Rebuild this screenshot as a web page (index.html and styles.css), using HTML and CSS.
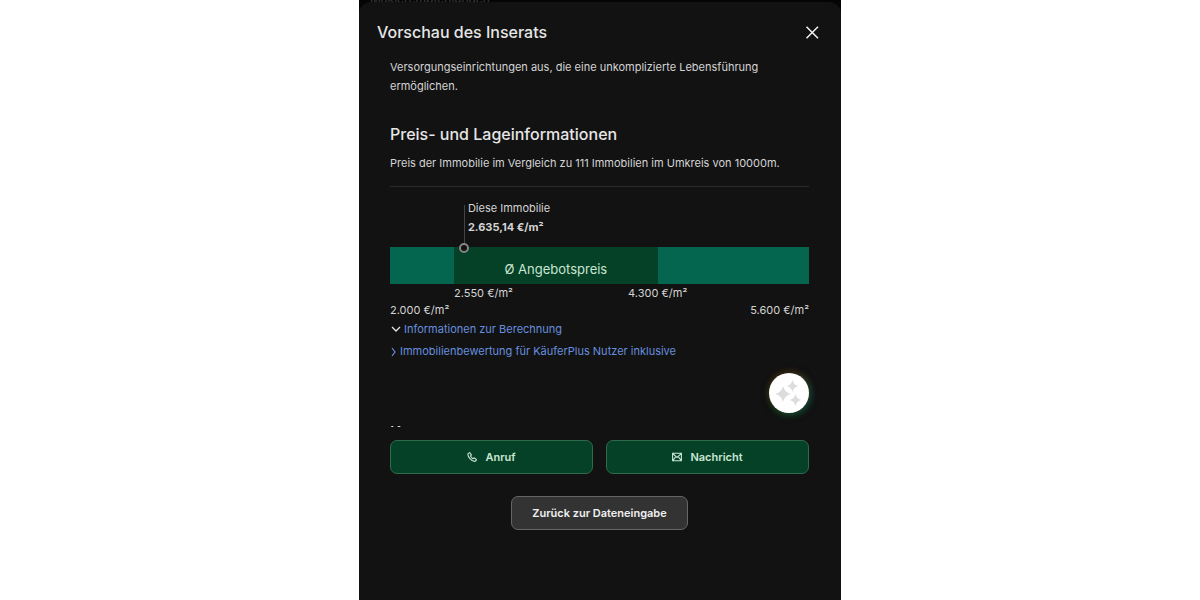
FILE: index.html
```html
<!DOCTYPE html>
<html lang="de">
<head>
<meta charset="utf-8">
<meta name="viewport" content="width=device-width, initial-scale=1">
<title>Vorschau des Inserats</title>
<link rel="stylesheet" href="styles.css">
</head>
<body>
<div class="screen">
  <div class="backdrop" aria-hidden="true">Maklerempfehlungen</div>
  <section class="sheet">
    <header class="sheet-header">
      <h1 class="sheet-title">Vorschau des Inserats</h1>
      <button class="close" type="button" aria-label="Schließen">
        <svg width="14" height="14" viewBox="0 0 14 14"><path d="M1.500 1.800l11.500 11.500M13 1.800L1.500 13.300" fill="none" stroke="currentColor" stroke-width="1.5"/></svg>
      </button>
    </header>

    <main class="content">
      <p class="text">Versorgungseinrichtungen aus, die eine unkomplizierte Lebensführung ermöglichen.</p>
      <h2 class="section-title">Preis- und Lageinformationen</h2>
      <p class="text">Preis der Immobilie im Vergleich zu 111 Immobilien im Umkreis von 10000m.</p>

      <div class="price-range">
        <div class="marker" style="left: 17.64%">
          <span>Diese Immobilie</span>
          <strong>2.635,14 €/m²</strong>
        </div>
        <div class="bar">
          <div class="average" style="left: 15.28%; width: 48.61%">Ø Angebotspreis</div>
        </div>
        <div class="bounds">
          <span class="bound-low" style="left: 15.28%">2.550 €/m²</span>
          <span class="bound-high" style="left: 63.89%">4.300 €/m²</span>
        </div>
        <div class="extremes"><span>2.000 €/m²</span><span>5.600 €/m²</span></div>
      </div>

      <div class="links">
        <a class="link" href="#berechnung">
          <svg class="chevron-down" width="12" height="12" viewBox="0 0 12 12"><path d="M2 3l4 4 4-4" fill="none" stroke="currentColor" stroke-width="1.3"/></svg>
          Informationen zur Berechnung
        </a>
        <a class="link" href="#bewertung">
          <svg width="8" height="10" viewBox="0 0 8 10"><path d="M2 1l3 4-3 4" fill="none" stroke="currentColor" stroke-width="1.2"/></svg>
          Immobilienbewertung für KäuferPlus Nutzer inklusive
        </a>
      </div>
      <h2 class="section-title next-section">Karte</h2>
      <button class="assistant" type="button" aria-label="Assistent">
        <svg width="28" height="28" viewBox="0 0 28 28" fill="#dcdcde">
          <path d="M8 7Q9.500 13.500 16 15Q9.500 16.500 8 23Q6.500 16.500 0 15Q6.500 13.500 8 7Z"/>
          <path d="M17.500 1Q18.500 6 23.500 7Q18.500 8 17.500 13Q16.500 8 11.500 7Q16.500 6 17.500 1Z"/>
          <path d="M20.500 15Q21.500 20 26.500 21Q21.500 22 20.500 27Q19.500 22 14.500 21Q19.500 20 20.500 15Z"/>
        </svg>
      </button>
    </main>

    <footer class="actions">
      <div class="contact">
        <button class="btn btn-green" type="button">
          <svg width="10" height="10" viewBox="0 0 10 10"><path d="M2.600.6L1 1.600C.2 4.500 5 9.900 8.300 9.300L9.500 7.700 7.300 5.800 6 6.700C5 6.200 4 5 3.500 4L4.400 2.800Z" fill="none" stroke="currentColor" stroke-width="1.100" stroke-linejoin="round"/></svg>
          Anruf
        </button>
        <button class="btn btn-green" type="button">
          <svg width="10" height="10" viewBox="0 0 10 10"><path d="M.6 1.300h8.800v7.400H.6zM.8 1.700L5 5.400l4.200-3.700M.8 8.400l2.700-3.200M9.200 8.400L6.500 5.200" fill="none" stroke="currentColor" stroke-width="1.100"/></svg>
          Nachricht
        </button>
      </div>
      <button class="btn btn-grey" type="button">Zurück zur Dateneingabe</button>
    </footer>
  </section>
</div>
</body>
</html>
```
FILE: styles.css
```css
*,
*::before,
*::after {
  box-sizing: border-box;
}

body {
  margin: 0;
  background: #fff;
  color: #d4d4d4;
  font: 11px/19px Inter, "Open Sans", sans-serif;
}

h1,
h2,
p {
  margin: 0;
}

.screen {
  display: flex;
  flex-direction: column;
  max-width: 482px;
  height: 100vh;
  margin: 0 auto;
  background: #050505;
  overflow: hidden;
}

.backdrop {
  display: flex;
  flex: none;
  align-items: flex-end;
  height: 2px;
  padding-left: 11px;
  color: #3c3c3c;
  font-size: 12px;
  line-height: 6px;
}

.sheet {
  position: relative;
  display: flex;
  flex: 1;
  flex-direction: column;
  min-height: 0;
  border-radius: 12px 12px 0 0;
  background: #121212;
}

.sheet-header {
  display: flex;
  align-items: center;
  justify-content: space-between;
  padding: 18px 18px 14px;
}

.sheet-title,
.section-title {
  color: #e6e6e6;
  font-size: 16px;
  font-weight: 500;
  line-height: 24px;
}

.close {
  display: flex;
  padding: 4px;
  border: 0;
  background: none;
  color: #f4f4f4;
}

.content {
  position: relative;
  flex: 1;
  min-height: 0;
  margin: 0 32px 0 31px;
  overflow-x: visible;
  overflow-y: clip;
}

.section-title {
  margin: 26px 0 8px;
}

.price-range {
  margin-top: 13px;
  padding-top: 12px;
  border-top: 1px solid #2a2a2a;
}

.marker {
  position: relative;
  display: flex;
  flex-direction: column;
  width: max-content;
  padding: 0 0 10px 4px;
}

.marker::before {
  position: absolute;
  top: 6px;
  bottom: 4px;
  left: 0;
  width: 1px;
  background: #444;
  content: "";
}

.marker::after {
  position: absolute;
  z-index: 1;
  bottom: -6px;
  left: -5px;
  width: 10px;
  height: 10px;
  border: 2px solid #858585;
  border-radius: 50%;
  background: #121212;
  content: "";
}

.bar {
  position: relative;
  height: 37px;
  background: #04664e;
}

.average {
  position: absolute;
  height: 100%;
  padding-top: 8px;
  background: #054126;
  color: #c9e6d4;
  font-size: 13px;
  line-height: 29px;
  text-align: center;
}

.bounds {
  position: relative;
  height: 17px;
}

.bounds span {
  position: absolute;
}

.bound-high {
  transform: translateX(-50%);
}

.extremes {
  display: flex;
  justify-content: space-between;
}

.links {
  display: flex;
  flex-direction: column;
  align-items: flex-start;
  gap: 3px;
}

.link {
  display: flex;
  align-items: center;
  gap: 2px;
  color: #678fdf;
  text-decoration: none;
}

.chevron-down {
  color: #e4e4e4;
}

.next-section {
  margin-top: 59px;
}

.assistant {
  position: absolute;
  right: 0;
  bottom: 14px;
  display: flex;
  align-items: center;
  justify-content: center;
  width: 40px;
  height: 40px;
  padding: 0;
  border: 0;
  border-radius: 50%;
  background: #fff;
  box-shadow: 0 -2px 7px #74330080, 3px 1px 7px #00606080, 0 3px 7px #125a1880;
}

.actions {
  display: flex;
  flex-direction: column;
  align-items: center;
  gap: 22px;
  padding: 13px 32px 70px 31px;
}

.contact {
  display: grid;
  grid-template-columns: 1fr 1fr;
  gap: 13px;
  width: 100%;
}

.btn {
  display: flex;
  align-items: center;
  justify-content: center;
  gap: 8px;
  height: 34px;
  padding: 0 20px;
  border: 1px solid;
  border-radius: 7px;
  font: 600 11px/16px Inter, "Open Sans", sans-serif;
}

.btn-green {
  border-color: #2f6a4b;
  background: #054126;
  color: #c9e6d4;
}

.btn-grey {
  border-color: #666;
  background: #333;
  color: #f0f0f0;
}
```
